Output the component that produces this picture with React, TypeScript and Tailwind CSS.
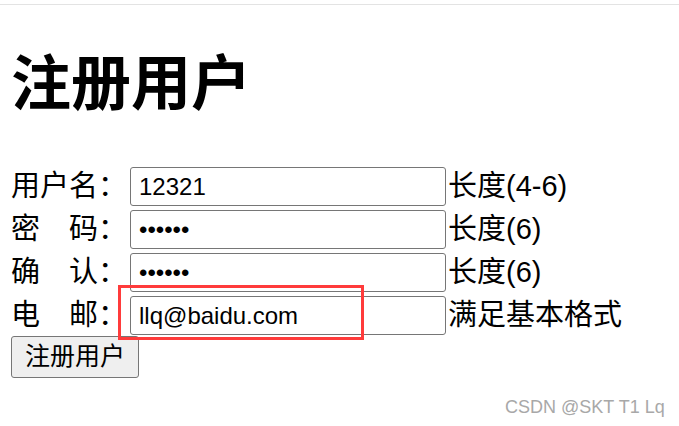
import React from "react";

const font = { fontFamily: '"Liberation Sans", "Noto Sans CJK SC", sans-serif' };

function Row({ label, type, value, hint }: { label: string; type: string; value: string; hint: string }) {
  return (
    <div className="flex items-center h-[39px]">
      <span className="w-[119px] text-[29px] leading-none text-black whitespace-pre">{label}</span>
      <input
        type={type}
        defaultValue={value}
        className="w-[316px] h-[39px] border border-[#767676] rounded-[3px] px-[8px] text-[24px] text-black bg-white outline-none"
        style={font}
      />
      <span className="ml-[2px] text-[29px] leading-none text-black whitespace-nowrap">{hint}</span>
    </div>
  );
}

export default function App() {
  return (
    <div className="relative w-[679px] h-[426px] bg-white overflow-hidden" style={font}>
      <div className="mt-[4px] h-px bg-[#e3e3e3]" />
      <h1 className="mt-[50px] ml-[11px] text-[60px] leading-[60px] font-bold text-black">注册用户</h1>
      <div className="mt-[52px] ml-[11px] flex flex-col gap-[4px]">
        <Row label="用户名：" type="text" value="12321" hint="长度(4-6)" />
        <Row label="密　码：" type="password" value="123456" hint="长度(6)" />
        <Row label="确　认：" type="password" value="123456" hint="长度(6)" />
        <Row label="电　邮：" type="text" value="llq@baidu.com" hint="满足基本格式" />
      </div>
      <button
        className="ml-[11px] mt-px w-[128px] h-[42px] bg-[#efefef] border border-[#767676] rounded-[3px] text-[25px] text-black flex items-center justify-center"
        style={font}
      >
        注册用户
      </button>
      <div className="absolute left-[118px] top-[285px] w-[246px] h-[55px] border-[3px] border-[#ff3b3b]" />
      <div className="absolute left-[505px] top-[394px] text-[18px] text-[#a8a8a8] whitespace-nowrap">CSDN @SKT T1 Lq</div>
    </div>
  );
}
